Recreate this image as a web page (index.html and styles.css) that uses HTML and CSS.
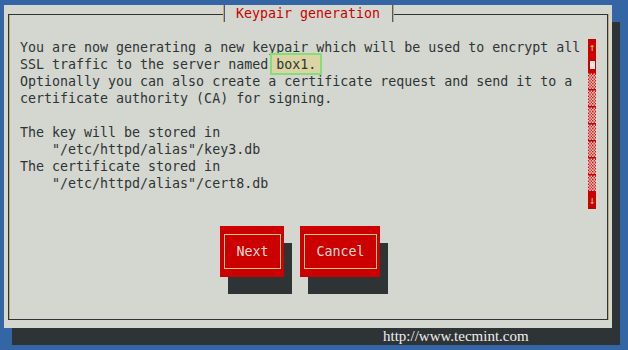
FILE: index.html
```html
<!DOCTYPE html>
<html>
<head>
<title>Keypair generation</title>
<link rel="stylesheet" href="styles.css">
</head>
<body>
<div class="dialog">
  <div class="frame">
    <div class="title">Keypair generation</div>
    <div class="content">
      <pre class="message">You are now generating a new keypair which will be used to encrypt all
SSL traffic to the server named <span class="hl">box1.</span>
Optionally you can also create a certificate request and send it to a
certificate authority (CA) for signing.

The key will be stored in
    "/etc/httpd/alias"/key3.db
The certificate stored in
    "/etc/httpd/alias"/cert8.db</pre>
      <div class="scrollbar">
        <span class="arrow">↑</span>
        <span class="thumb"><i></i></span>
        <span class="track">▒</span>
        <span class="track">▒</span>
        <span class="track">▒</span>
        <span class="track">▒</span>
        <span class="track">▒</span>
        <span class="track">▒</span>
        <span class="track">▒</span>
        <span class="arrow">↓</span>
      </div>
    </div>
    <div class="buttons">
      <div class="button"><span>Next</span></div>
      <div class="button wide"><span>Cancel</span></div>
    </div>
  </div>
</div>
<div class="watermark">http://www.tecmint.com</div>
</body>
</html>
```

FILE: styles.css
```css
html, body {margin: 0;}
body {background: #3465a4;
      width: 628px; height: 350px; overflow: hidden;
      font-family: "DejaVu Sans Mono", monospace;
      font-size: 13.3px; line-height: 17px;
      color: #2e3436;}

/* newt window: one cell = 8x17 */
.dialog {margin: 5px 0 0 4px;
         width: 608px; height: 323px;
         background: #d3d7cf;
         box-shadow: 8px 17px 0 #2e3436;
         display: flex; flex-direction: column;}
.frame {margin: 9px 4px 8px 4px;
        flex: 1;
        border: 1px solid #2e3436;
        box-shadow: inset 1px 0 0 #c9a866, 1px 0 0 #c9a866;}
.title {margin: -10px 0 0 215px;
        width: 156px; height: 17px;
        padding-left: 11px;
        background: #d3d7cf;
        color: #cc0000;
        border-left: 1px solid #4a5a7a;
        border-right: 1px solid #4a5a7a;
        box-shadow: -1px 0 0 #c9a866, 1px 0 0 #c9a866;}

.content {display: flex;
          margin-top: 17px;
          padding-left: 11px;
          height: 170px;}
.message {flex: 1; margin: 0;
          font: inherit;}
.hl {display: inline-block;
     padding: 1px 4px 0; margin: -1px -4px 0;
     background: #dad5a2;
     outline: 2px solid #86de7a;}

.scrollbar {width: 8px; margin-right: 11px;
            background: #cc0000;
            display: flex; flex-direction: column;}
.scrollbar span {height: 17px; text-align: center;}
.arrow {color: #ecc77a; font-size: 11px;}
.track {color: #f4d4d4;}
.thumb {display: flex; align-items: center; justify-content: center;}
.thumb i {display: block; width: 5px; height: 8px; background: #f1e6e2;}

.buttons {display: flex; gap: 16px;
          margin-top: 17px;
          padding-left: 211px;}
.button {box-sizing: border-box;
         width: 64px; height: 51px;
         padding: 8px 3px 8px 4px;
         background: #cc0000;
         box-shadow: 8px 17px 0 #2e3436;}
.button.wide {width: 80px;}
.button span {display: flex; height: 100%;
              box-sizing: border-box;
              align-items: center; justify-content: center;
              border: 1px solid #e6c98c;
              color: #f4dcd6;}

.watermark {margin-left: 383px; height: 17px;
            font-family: "Liberation Serif", serif;
            font-size: 15px; line-height: 17px;
            color: #eeeeec;}
```
